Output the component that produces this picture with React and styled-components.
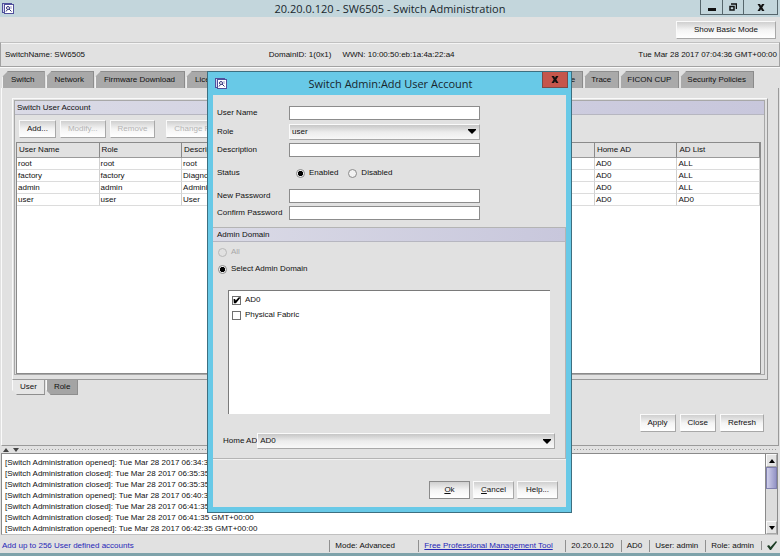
// Switch administration window with the "Add User Account" dialog open on top
import React, { Component } from "react";
import styled, { createGlobalStyle } from "styled-components";

const USERS = [
  { name: "root", role: "root", description: "root", home: "AD0", list: "ALL" },
  {
    name: "factory",
    role: "factory",
    description: "Diagnostics",
    home: "AD0",
    list: "ALL"
  },
  {
    name: "admin",
    role: "admin",
    description: "Administrator",
    home: "AD0",
    list: "ALL"
  },
  { name: "user", role: "user", description: "User", home: "AD0", list: "AD0" }
];

const LOG = [
  "[Switch Administration opened]: Tue Mar 28 2017 06:34:35 GMT+00:00",
  "[Switch Administration closed]: Tue Mar 28 2017 06:35:35 GMT+00:00",
  "[Switch Administration closed]: Tue Mar 28 2017 06:35:35 GMT+00:00",
  "[Switch Administration opened]: Tue Mar 28 2017 06:40:35 GMT+00:00",
  "[Switch Administration closed]: Tue Mar 28 2017 06:41:35 GMT+00:00",
  "[Switch Administration closed]: Tue Mar 28 2017 06:41:35 GMT+00:00",
  "[Switch Administration opened]: Tue Mar 28 2017 06:42:35 GMT+00:00"
];

const AppIcon = () => (
  <svg width="12" height="12" viewBox="0 0 12 12" aria-hidden="true">
    <rect x="0.5" y="0.5" width="9" height="9" fill="#d5d5ee" stroke="#50509c" />
    <rect x="2.5" y="1.5" width="9" height="9" fill="#fff" stroke="#50509c" />
    <circle cx="6" cy="5" r="1.5" fill="none" stroke="#34347c" />
    <path d="M4 8.5 L5.5 6.5 M7 6 L9.5 8.5" stroke="#34347c" />
    <path d="M9 3 V6" stroke="#9a9ac8" />
  </svg>
);

const Cross = () => (
  <svg width="8" height="7" viewBox="0 0 8 7" aria-hidden="true">
    <path d="M0.5 0 H3 L4 1.8 L5 0 H7.5 L5.3 3.5 L7.5 7 H5 L4 5.2 L3 7 H0.5 L2.7 3.5 Z" fill="#111" />
  </svg>
);

const Combo = ({ id, children }) => (
  <ComboWrapper>
    <ComboSelect id={id}>{children}</ComboSelect>
    <svg width="8" height="5" viewBox="0 0 8 5" aria-hidden="true">
      <path d="M0 0 H8 V1 L4 5 L0 1 Z" fill="#000" />
    </svg>
  </ComboWrapper>
);

class App extends Component {
  state = {
    status: "enabled",
    ad0: true,
    fabric: false
  };
  renderDialog() {
    const { status, ad0, fabric } = this.state;
    return (
      <Dialog role="dialog" aria-labelledby="dialog-title">
        <DialogTitleBar>
          <AppIcon />
          <Title id="dialog-title">Switch Admin:Add User Account</Title>
          <DialogClose aria-label="Close dialog">
            <Cross />
          </DialogClose>
        </DialogTitleBar>
        <DialogBody>
          <Fields>
            <FieldRow>
              <label htmlFor="user-name">User Name</label>
              <TextBox id="user-name" />
            </FieldRow>
            <FieldRow $tall>
              <label htmlFor="role">Role</label>
              <Combo id="role">
                <option>user</option>
              </Combo>
            </FieldRow>
            <FieldRow>
              <label htmlFor="description">Description</label>
              <TextBox id="description" />
            </FieldRow>
            <StatusRow>
              <span>Status</span>
              <Choices>
                <Choice>
                  <Radio
                    name="status"
                    checked={status === "enabled"}
                    onChange={() => this.setState({ status: "enabled" })}
                  />
                  Enabled
                </Choice>
                <Choice>
                  <Radio
                    name="status"
                    checked={status === "disabled"}
                    onChange={() => this.setState({ status: "disabled" })}
                  />
                  Disabled
                </Choice>
              </Choices>
            </StatusRow>
            <FieldRow>
              <label htmlFor="new-password">New Password</label>
              <TextBox id="new-password" type="password" />
            </FieldRow>
            <FieldRow>
              <label htmlFor="confirm-password">Confirm Password</label>
              <TextBox id="confirm-password" type="password" />
            </FieldRow>
          </Fields>
          <DomainGroup>
            <GroupHeader>Admin Domain</GroupHeader>
            <DomainChoices>
              <Choice $off>
                <Radio name="domain" disabled />
                All
              </Choice>
              <Choice>
                <Radio name="domain" defaultChecked />
                Select Admin Domain
              </Choice>
            </DomainChoices>
            <DomainList>
              <Choice>
                <CheckBox
                  checked={ad0}
                  onChange={() => this.setState({ ad0: !ad0 })}
                />
                AD0
              </Choice>
              <Choice>
                <CheckBox
                  checked={fabric}
                  onChange={() => this.setState({ fabric: !fabric })}
                />
                Physical Fabric
              </Choice>
            </DomainList>
            <HomeRow>
              <label htmlFor="home-ad">Home AD</label>
              <Combo id="home-ad">
                <option>AD0</option>
              </Combo>
            </HomeRow>
          </DomainGroup>
          <DialogButtons>
            <Button $focused>
              <u>O</u>k
            </Button>
            <Button>
              <u>C</u>ancel
            </Button>
            <Button>Help...</Button>
          </DialogButtons>
        </DialogBody>
      </Dialog>
    );
  }
  render() {
    return (
      <Page>
        <GlobalStyle />
        <TitleBar>
          <AppIcon />
          <Title>20.20.0.120 - SW6505 - Switch Administration</Title>
          <WindowButtons>
            <WindowButton aria-label="Minimize">
              <svg width="8" height="7" viewBox="0 0 8 7">
                <path d="M0 4 H8 V7 H0 Z" fill="#111" />
              </svg>
            </WindowButton>
            <WindowButton aria-label="Restore">
              <svg width="8" height="8" viewBox="0 0 8 8">
                <path d="M2 1 H7.5 V6 M1 3.5 H5 V7 H1 Z" fill="none" stroke="#111" strokeWidth="1.5" />
              </svg>
            </WindowButton>
            <WindowButton $wide aria-label="Close">
              <Cross />
            </WindowButton>
          </WindowButtons>
        </TitleBar>
        <ModeBar>
          <Button $wide>Show Basic Mode</Button>
        </ModeBar>
        <InfoBar>
          <span>SwitchName: SW6505</span>
          <InfoMiddle>
            <span>DomainID: 1(0x1)</span>
            <span>WWN: 10:00:50:eb:1a:4a:22:a4</span>
          </InfoMiddle>
          <span>Tue Mar 28 2017 07:04:36 GMT+00:00</span>
        </InfoBar>
        <Tabs>
          <TabGroup>
            <Tab>Switch</Tab>
            <Tab>Network</Tab>
            <Tab>Firmware Download</Tab>
            <Tab>License</Tab>
          </TabGroup>
          <TabGroup>
            <Tab $narrow>AAA Service</Tab>
            <Tab $narrow>Trace</Tab>
            <Tab $narrow>FICON CUP</Tab>
            <Tab $narrow>Security Policies</Tab>
          </TabGroup>
        </Tabs>
        <Pane>
          <AccountPanel>
            <AccountInner>
              <GroupHeader>Switch User Account</GroupHeader>
              <Toolbar>
                <Button>Add...</Button>
                <Button disabled>Modify...</Button>
                <Button disabled>Remove</Button>
                <ToolbarGap />
                <Button disabled>Change Password...</Button>
              </Toolbar>
              <TableBox>
                <UserTable>
                  <colgroup>
                    <Col $share={1} />
                    <Col $share={1} />
                    <Col $share={5} />
                    <Col $share={1} />
                    <Col $share={1} />
                  </colgroup>
                  <thead>
                    <tr>
                      <th>User Name</th>
                      <th>Role</th>
                      <th>Description</th>
                      <th>Home AD</th>
                      <th>AD List</th>
                    </tr>
                  </thead>
                  <tbody>
                    {USERS.map(user => (
                      <tr key={user.name}>
                        <td>{user.name}</td>
                        <td>{user.role}</td>
                        <td>{user.description}</td>
                        <td>{user.home}</td>
                        <td>{user.list}</td>
                      </tr>
                    ))}
                  </tbody>
                </UserTable>
              </TableBox>
            </AccountInner>
          </AccountPanel>
          <SubTabs>
            <SubTab $active>User</SubTab>
            <SubTab>Role</SubTab>
          </SubTabs>
          <PaneButtons>
            <Button>Apply</Button>
            <Button>Close</Button>
            <Button>Refresh</Button>
          </PaneButtons>
        </Pane>
        <Splitter>
          <svg width="18" height="4" viewBox="0 0 18 4" aria-hidden="true">
            <path d="M0 4 L3 0 L6 4 Z M10 0 H16 L13 4 Z" fill="#444" />
          </svg>
          <Dots />
        </Splitter>
        <LogBox>
          <LogLines>
            {LOG.map((line, index) => (
              <li key={index}>{line}</li>
            ))}
          </LogLines>
          <ScrollBar>
            <ScrollButton aria-label="Scroll up">
              <svg width="6" height="4" viewBox="0 0 6 4">
                <path d="M0 4 L3 0 L6 4 Z" fill="#000" />
              </svg>
            </ScrollButton>
            <Thumb />
            <ScrollButton aria-label="Scroll down">
              <svg width="6" height="4" viewBox="0 0 6 4">
                <path d="M0 0 H6 L3 4 Z" fill="#000" />
              </svg>
            </ScrollButton>
          </ScrollBar>
        </LogBox>
        <StatusBar>
          <Hint>Add up to 256 User defined accounts</Hint>
          <StatusMode>Mode: Advanced</StatusMode>
          <StatusTool>
            <a href="#tool">Free Professional Management Tool</a>
          </StatusTool>
          <StatusItem>20.20.0.120</StatusItem>
          <StatusItem>AD0</StatusItem>
          <StatusItem>User: admin</StatusItem>
          <StatusItem>Role: admin</StatusItem>
          <StatusItem>
            <svg width="10" height="9" viewBox="0 0 10 9" aria-hidden="true">
              <path d="M0 5 L2 4 L3.5 6 L9 0 L10 1 L4 9 H3 Z" fill="#1c3c24" />
            </svg>
          </StatusItem>
        </StatusBar>
        <Desktop />
        <Overlay>{this.renderDialog()}</Overlay>
      </Page>
    );
  }
}

const GlobalStyle = createGlobalStyle`
  * {
    box-sizing: border-box;
  }
  body {
    margin: 0;
    color: #101010;
    background: #e1e1e1;
    font: 8px/12px "Liberation Sans", Arial, sans-serif;
  }
  button, input, select {
    font: inherit;
    color: inherit;
    margin: 0;
  }
  svg {
    display: block;
  }
`;

const Page = styled.div`
  min-height: 100vh;
  display: flex;
  flex-direction: column;
  overflow: hidden;
  white-space: nowrap;
`;

const TitleBar = styled.header`
  height: 17px;
  flex: none;
  display: grid;
  grid-template-columns: 80px 1fr 80px;
  align-items: center;
  padding: 0 2px;
  background: #c3d6dc;
`;

const Title = styled.h1`
  margin: 0;
  text-align: center;
  font: 400 11px/16px "Open Sans", sans-serif;
  color: #18262c;
`;

const WindowButtons = styled.div`
  display: flex;
  justify-self: end;
  align-self: start;
  border: 1px solid #56666c;
  border-top: 0;
`;

const WindowButton = styled.button`
  width: ${props => (props.$wide ? "34px" : "21px")};
  height: 14px;
  padding: 0;
  display: flex;
  align-items: center;
  justify-content: center;
  border: 0;
  background: transparent;
  & + & {
    border-left: 1px solid #56666c;
  }
`;

const ModeBar = styled.div`
  height: 25px;
  flex: none;
  display: flex;
  justify-content: flex-end;
  align-items: center;
  padding: 1px 4px 0;
`;

const Button = styled.button`
  height: 18px;
  padding: ${props => (props.$wide ? "0 17px" : "0 7px")};
  border: 1px solid ${props => (props.$focused ? "#8a8a8a" : "#fafafa")};
  border-right-color: ${props => (props.$focused ? "#8a8a8a" : "#a8a8a8")};
  border-bottom-color: ${props => (props.$focused ? "#8a8a8a" : "#a8a8a8")};
  background: linear-gradient(#cfcfcf, #f4f4f4 50%, #ffffff);
  &:disabled {
    color: #b4b4b4;
  }
`;

const InfoBar = styled.div`
  height: 25px;
  flex: none;
  display: flex;
  justify-content: space-between;
  align-items: center;
  padding: 0 2px 0 4px;
  border: 1px solid #a2a2a2;
  border-top-color: #c0c0c0;
  box-shadow: 0 1px #fafafa, inset 0 1px #f4f4f4;
`;

const InfoMiddle = styled.div`
  display: flex;
  gap: 11px;
`;

const Tabs = styled.nav`
  flex: none;
  display: flex;
  justify-content: space-between;
  padding: 4px 26px 0 2px;
`;

const TabGroup = styled.div`
  display: flex;
  gap: 1px;
`;

const Tab = styled.button`
  height: 17px;
  padding: ${props => (props.$narrow ? "0 7px 0 6px" : "0 9px 0 8px")};
  border: 0;
  border-top: 1px solid #8e8e8e;
  border-left: 1px solid #f2f2f2;
  border-right: 1px solid #8a8a8a;
  background: #a9a9a9;
  clip-path: polygon(6px 0, 100% 0, 100% 100%, 0 100%, 0 6px);
`;

const Pane = styled.main`
  flex: 1;
  display: flex;
  flex-direction: column;
  margin: 0 1px;
  padding: 10px 10px 0 10px;
  border-left: 1px solid #fafafa;
  border-right: 1px solid #9a9a9a;
  border-bottom: 1px solid #9a9a9a;
`;

const AccountPanel = styled.section`
  flex: 1;
  display: flex;
  flex-direction: column;
  padding: 1px 2px 4px 1px;
  border: 1px solid #9a9a9a;
  border-top-color: #fafafa;
  border-left-color: #fafafa;
`;

const AccountInner = styled.div`
  flex: 1;
  display: flex;
  flex-direction: column;
  border: 1px solid #a8a8a8;
`;

const GroupHeader = styled.h2`
  margin: 0;
  height: 14px;
  flex: none;
  padding: 0 2px;
  font-size: 8px;
  font-weight: 400;
  line-height: 13px;
  background: linear-gradient(90deg, #dadae6, #c8c7dc);
  border-bottom: 1px solid #b6b6c0;
`;

const Toolbar = styled.div`
  display: flex;
  gap: 4px;
  padding: 5px 4px 4px;
`;

const ToolbarGap = styled.span`
  width: 3px;
`;

const TableBox = styled.div`
  flex: 1;
  margin: 0 3px 0 1px;
  background: #fff;
  border: 1px solid #8a8a8a;
`;

const UserTable = styled.table`
  width: 100%;
  table-layout: fixed;
  border-collapse: separate;
  border-spacing: 0;
  th,
  td {
    padding: 0 0 0 1px;
    text-align: left;
    font-weight: 400;
    overflow: hidden;
    border-right: 1px solid #d0d0d0;
    border-bottom: 1px solid #dcdcdc;
  }
  th {
    height: 15px;
    padding-left: 2px;
    background: #e1e1e1;
    border-right-color: #8a8a8a;
    border-bottom-color: #9a9a9a;
  }
  td {
    height: 12px;
    line-height: 11px;
  }
`;

const Col = styled.col`
  width: ${props => (props.$share * 100) / 9}%;
`;

const SubTabs = styled.nav`
  display: flex;
  gap: 1px;
`;

const SubTab = styled.button`
  height: 15px;
  padding: 0 7px;
  border: 0;
  border-left: 1px solid #fafafa;
  border-right: 1px solid #8e8e8e;
  border-bottom: 1px solid #8e8e8e;
  background: ${props => (props.$active ? "#e6e6e6" : "#a4a4a4")};
  clip-path: polygon(0 0, 100% 0, 100% 100%, 5px 100%, 0 10px);
`;

const PaneButtons = styled.div`
  display: flex;
  justify-content: flex-end;
  gap: 4px;
  padding: 19px 4px 13px 0;
`;

const Splitter = styled.div`
  height: 7px;
  flex: none;
  display: flex;
  align-items: center;
  gap: 1px;
  padding: 0 2px 0 3px;
`;

const Dots = styled.span`
  flex: 1;
  height: 3px;
  background: linear-gradient(90deg, #9c9c9c 1px, transparent 1px) 0 1px / 3px 1px repeat-x;
`;

const LogBox = styled.section`
  height: 82px;
  flex: none;
  display: flex;
  margin: 0 2px 0 1px;
  border: 1px solid #8a8a8a;
  border-bottom-color: #c0c0c0;
  background: #fff;
`;

const LogLines = styled.ul`
  flex: 1;
  margin: 0;
  padding: 3px 3px 0;
  list-style: none;
  line-height: 11px;
`;

const ScrollBar = styled.div`
  width: 12px;
  display: flex;
  flex-direction: column;
  background: #dcdcdc;
  border-left: 1px solid #8a8a8a;
`;

const ScrollButton = styled.button`
  height: 13px;
  padding: 0;
  display: flex;
  align-items: center;
  justify-content: center;
  border: 1px solid #fafafa;
  border-right-color: #a8a8a8;
  border-bottom-color: #a8a8a8;
  background: #e4e4e4;
`;

const Thumb = styled.div`
  height: 22px;
  margin-bottom: auto;
  border: 1px solid #8080ae;
  background: linear-gradient(90deg, #cfcfea, #9494c6);
`;

const StatusBar = styled.footer`
  height: 18px;
  flex: none;
  display: flex;
  align-items: center;
  padding: 3px 3px 0 2px;
  a {
    color: #2727b8;
  }
`;

const Hint = styled.span`
  flex: 1;
  color: #2727b8;
`;

const StatusItem = styled.span`
  padding: 0 7px 0 5px;
  border-left: 1px solid #909090;
  &:last-child {
    padding-right: 0;
  }
`;

const StatusMode = styled(StatusItem)`
  width: 89px;
`;

const StatusTool = styled(StatusItem)`
  width: 147px;
`;

const Desktop = styled.div`
  height: 3px;
  flex: none;
  background: #7ea2aa;
`;

const Overlay = styled.div`
  position: fixed;
  inset: 0;
  display: flex;
  justify-content: center;
  align-items: flex-start;
  padding: 71px 1px 0 0;
`;

const Dialog = styled.section`
  width: 365px;
  padding: 0 5px 5px;
  border: 1px solid #3d6f80;
  background: #68c9e7;
`;

const DialogTitleBar = styled.header`
  height: 23px;
  display: grid;
  grid-template-columns: 26px 1fr 26px;
  align-items: center;
  margin-right: -2px;
  svg {
    margin-left: 2px;
  }
`;

const DialogClose = styled.button`
  width: 26px;
  height: 16px;
  align-self: start;
  padding: 0;
  display: flex;
  align-items: center;
  justify-content: center;
  border: 1px solid #7c4a48;
  border-top: 0;
  background: #c5564c;
  svg {
    margin: 0;
  }
`;

const DialogBody = styled.div`
  background: #e1e1e1;
`;

const Fields = styled.div`
  padding: 11px 86px 7px 4px;
  display: flex;
  flex-direction: column;
  gap: 3px;
`;

const FieldRow = styled.div`
  display: grid;
  grid-template-columns: 72px 1fr;
  align-items: center;
  height: ${props => (props.$tall ? "17px" : "14px")};
`;

const StatusRow = styled(FieldRow)`
  height: 26px;
`;

const TextBox = styled.input`
  width: 100%;
  height: 14px;
  padding: 0 2px;
  border: 1px solid #8c8c8c;
  border-radius: 0;
  background: #fff;
  outline: 0;
`;

const ComboWrapper = styled.div`
  display: grid;
  align-items: center;
  flex: 1;
  svg {
    grid-area: 1 / 1;
    justify-self: end;
    margin-right: 4px;
    pointer-events: none;
  }
`;

const ComboSelect = styled.select`
  grid-area: 1 / 1;
  width: 100%;
  height: 16px;
  padding: 0 2px;
  appearance: none;
  border: 1px solid #fafafa;
  border-right-color: #a8a8a8;
  border-bottom-color: #a8a8a8;
  border-radius: 0;
  background: linear-gradient(#c6c6c6, #ececec 50%, #f8f8f8);
`;

const Choices = styled.div`
  display: flex;
  gap: 10px;
  padding-left: 7px;
`;

const Choice = styled.label`
  display: flex;
  align-items: center;
  gap: 4px;
  color: ${props => (props.$off ? "#a8a8a8" : "inherit")};
`;

const Radio = styled.input.attrs({ type: "radio" })`
  appearance: none;
  width: 9px;
  height: 9px;
  border: 1px solid #8a8a8a;
  border-radius: 50%;
  background: #f2f2f2;
  &:checked {
    background: radial-gradient(circle, #000 45%, #f2f2f2 60%);
  }
  &:disabled {
    border-color: #b8b8b8;
    background: #e1e1e1;
  }
`;

const CheckBox = styled.input.attrs({ type: "checkbox" })`
  appearance: none;
  width: 9px;
  height: 9px;
  border: 1px solid #707070;
  background: #fff;
  &:checked::before {
    content: "";
    display: block;
    height: 7px;
    background: #000;
    clip-path: polygon(8% 35%, 30% 35%, 38% 58%, 90% 5%, 100% 25%, 42% 95%, 12% 95%);
  }
`;

const DomainGroup = styled.div`
  border: 1px solid #b4b4b4;
  border-left: 0;
  box-shadow: 0 1px #f2f2f2;
  ${GroupHeader} {
    padding-left: 4px;
  }
`;

const DomainChoices = styled.div`
  display: flex;
  flex-direction: column;
  gap: 5px;
  padding: 4px 5px 15px;
`;

const DomainList = styled.div`
  height: 124px;
  margin: 0 15px;
  padding: 3px;
  display: flex;
  flex-direction: column;
  gap: 3px;
  background: #fff;
  border-top: 1px solid #7a7a7a;
  border-left: 1px solid #7a7a7a;
`;

const HomeRow = styled.div`
  display: flex;
  align-items: center;
  padding: 19px 10px 9px;
`;

const DialogButtons = styled.div`
  display: flex;
  justify-content: flex-end;
  gap: 3px;
  padding: 22px 8px 8px;
  ${Button} {
    width: 41px;
    padding: 0;
  }
`;

export default App;
